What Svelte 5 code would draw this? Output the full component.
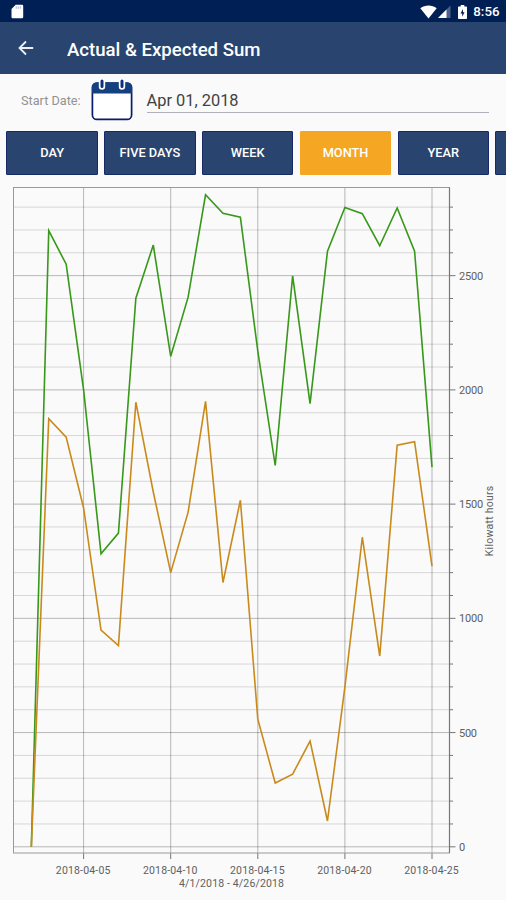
<script>
    const ranges = ['Day', 'Five days', 'Week', 'Month', 'Year', '']
    let active = $state('Month')

    // daily sums, starting at april 2nd
    const expected = [
        0, 2697, 2550, 2000, 1283, 1373, 2401, 2634, 2147, 2406, 2854, 2773,
        2756, 2170, 1669, 2499, 1940, 2607, 2798, 2771, 2631, 2796, 2607, 1662
    ]
    const actual = [
        0, 1874, 1793, 1483, 949, 881, 1946, 1553, 1200, 1465, 1950, 1157,
        1517, 559, 279, 318, 463, 113, 700, 1355, 835, 1758, 1773, 1229
    ]

    const left = 13.5
    const right = 449.5
    const top = 11.5
    const bottom = 677

    const x = (day) => 83.6 + (day - 5) * 17.42
    const y = (value) => 670.8 - value * 0.22846

    const toPoints = (values) => values.map((v, i) => `${x(i + 2)},${y(v)}`).join(' ')

    const rows = Array.from({length: 29}, (_, i) => i * 100)
    const days = [5, 10, 15, 20, 25]
</script>

<div class="screen">
    <div class="status">
        <svg class="sd" width="13" height="16" viewBox="0 0 13 16">
            <path d="M4.7 .7H11a1.2 1.2 0 0 1 1.2 1.2v11.2A1.2 1.2 0 0 1 11 14.3H1.7A1.2 1.2 0 0 1 .5 13.1V5z" fill="#fff" />
            <path d="M5.3 2.2v2.6M7.4 2.2v2.6M9.5 2.2v2.6" stroke="#c3c6cf" stroke-width="1.3" />
        </svg>
        <svg width="17" height="14" viewBox="0 0 17 14">
            <path d="M.3 3.2C5-.5 12-.5 16.7 3.2L8.5 13.5z" fill="#fff" />
        </svg>
        <svg class="signal" width="13" height="13" viewBox="0 0 13 13">
            <path d="M12.5 .5V13H0z" fill="#4c628b" />
            <path d="M8.5 4.5V13H0z" fill="#fff" />
        </svg>
        <svg class="battery" width="9" height="14" viewBox="0 0 9 14">
            <path d="M2.7 0h3.6v1.5h2c.4 0 .7.3.7.7v11.1c0 .4-.3.7-.7.7H.7c-.4 0-.7-.3-.7-.7V2.2c0-.4.3-.7.7-.7h2z" fill="#fff" />
            <path d="M5 4 2.5 8.5h1.7v3.3L6.6 7.3H5z" fill="#001f55" />
        </svg>
        <span class="clock">8:56</span>
    </div>

    <header>
        <svg width="16" height="16" viewBox="0 0 16 16">
            <path d="M15.2 8H1.8M8 1.5 1.5 8 8 14.5" fill="none" stroke="#edf0f6" stroke-width="1.8" />
        </svg>
        <h1>Actual &amp; Expected Sum</h1>
    </header>

    <div class="date-row">
        <span class="label">Start Date:</span>
        <svg class="calendar" width="42" height="42" viewBox="0 0 42 42">
            <rect x="1.4" y="4" width="39.2" height="36.4" rx="4.5" fill="#fff" stroke="#0a1b6b" stroke-width="1.7" />
            <path d="M1 14.5V8a4.5 4.5 0 0 1 4.5-4.5h31A4.5 4.5 0 0 1 41 8v6.5z" fill="#14407f" />
            <path d="M11 2.5v5M31 2.5v5" stroke="#fff" stroke-width="6.4" stroke-linecap="round" />
            <path d="M11 2v5.5M31 2v5.5" stroke="#0f2f7a" stroke-width="3" stroke-linecap="round" />
        </svg>
        <div class="date">Apr 01, 2018</div>
    </div>

    <div class="ranges">
        {#each ranges as range}
            <button class:active={active == range} onclick={() => (active = range)}>{range}</button>
        {/each}
    </div>

    <svg class="chart" width="506" height="724" viewBox="0 0 506 724">
        {#each rows as value}
            <line class="grid" class:major={value % 500 == 0} x1={left} x2={right} y1={y(value)} y2={y(value)} />
            <line class="tick" x1={right} x2={right + (value % 500 == 0 ? 6 : 3.5)} y1={y(value)} y2={y(value)} />
            {#if value % 500 == 0}
                <text x="459" y={y(value) + 4} textLength={value == 0 ? 6.3 : value == 500 ? 18 : 24.3}>{value}</text>
            {/if}
        {/each}

        {#each days as day}
            <line class="grid major" x1={x(day)} x2={x(day)} y1={top} y2={bottom} />
            <line class="tick" x1={x(day)} x2={x(day)} y1={bottom} y2={bottom + 6} />
            <text class="day" x={x(day) - 0.5} y="698" textLength="54.5">2018-04-{String(day).padStart(2, '0')}</text>
        {/each}

        <rect class="frame" x={left} y={top} width={right - left} height={bottom - top} />
        <path class="axis" d="M{right} {top}V{bottom}" />

        <polyline class="expected" points={toPoints(expected)} />
        <polyline class="actual" points={toPoints(actual)} />

        <text class="day" x="231.5" y="711" textLength="105">4/1/2018 - 4/26/2018</text>
        <text class="day" transform="translate(493 345) rotate(-90)" textLength="70.5">Kilowatt hours</text>
    </svg>
</div>

<style>
    :global(body) {
        margin: 0;
        background: #fafafa;
    }

    .screen {
        width: 506px;
        height: 900px;
        overflow: hidden;
        background: #fafafa;
        font-family: Roboto, sans-serif;
    }

    .status {
        display: flex;
        align-items: center;
        box-sizing: border-box;
        height: 22px;
        padding: 1px 6.5px 0 11px;
        background: #001f55;
    }

    .sd {
        margin-right: auto;
    }

    .signal {
        margin-left: 1px;
    }

    .battery {
        margin: 0 6.5px 0 7px;
    }

    .clock {
        color: #fff;
        font-size: 13.3px;
        font-weight: 500;
        line-height: 20px;
    }

    header {
        display: flex;
        align-items: center;
        height: 52px;
        padding-left: 18px;
        background: #29456f;
    }

    h1 {
        margin: 3px 0 0 33px;
        color: #fff;
        font-size: 18.6px;
        font-weight: 500;
    }

    .date-row {
        display: flex;
        height: 57px;
        padding: 0 17px 0 21px;
    }

    .label {
        width: 70px;
        padding-top: 18px;
        color: #929292;
        font-size: 12.7px;
        line-height: 17px;
    }

    .calendar {
        margin-top: 5px;
    }

    .date {
        flex: 1;
        height: 38px;
        margin-left: 13.5px;
        border-bottom: 1px solid #b0b1bd;
        color: #424242;
        font-size: 16.4px;
        line-height: 53px;
    }

    .ranges {
        display: flex;
        gap: 6.3px;
        height: 45px;
        padding-left: 6.4px;
        overflow: hidden;
    }

    button {
        flex: none;
        width: 91.5px;
        height: 43.5px;
        padding: 0;
        border: 1px solid #152a67;
        border-radius: 1px;
        background: #29456f;
        color: #fff;
        font: 500 12.8px Roboto, sans-serif;
        text-transform: uppercase;
    }

    button.active {
        border-color: #f5a623;
        background: #f5a623;
    }

    .chart {
        display: block;
    }

    .grid {
        stroke: #000;
        stroke-opacity: 0.14;
    }

    .grid.major {
        stroke-opacity: 0.27;
    }

    .tick {
        stroke: #777;
    }

    .frame {
        fill: none;
        stroke: #999;
    }

    .axis {
        stroke: #777;
        stroke-width: 1.2;
    }

    .expected,
    .actual {
        fill: none;
        stroke: #37981a;
        stroke-width: 1.6;
    }

    .actual {
        stroke: #c98a1c;
    }

    text {
        fill: #606060;
        font-size: 11px;
    }

    .day {
        font-size: 10.5px;
        text-anchor: middle;
    }
</style>
